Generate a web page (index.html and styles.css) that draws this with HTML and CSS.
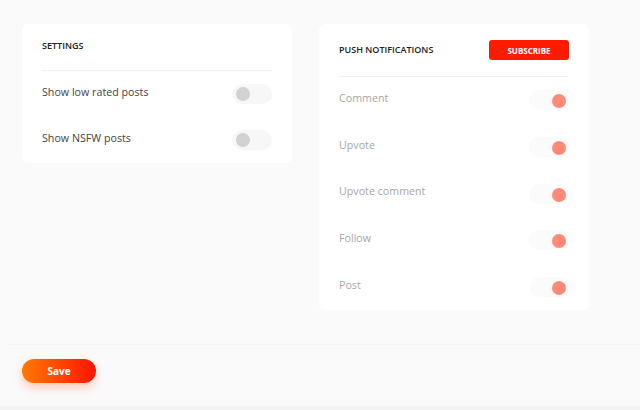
FILE: index.html
```
<!DOCTYPE html>
<html>
<head>
<meta charset="utf-8">
<link rel="stylesheet" href="styles.css">
</head>
<body>
<main class="main">
  <section class="card">
    <div class="card-head">
      <h2 class="title">SETTINGS</h2>
    </div>
    <div class="row">
      <span class="label">Show low rated posts</span>
      <span class="toggle"><span class="knob"></span></span>
    </div>
    <div class="row">
      <span class="label">Show NSFW posts</span>
      <span class="toggle"><span class="knob"></span></span>
    </div>
  </section>
  <section class="card card-push">
    <div class="card-head head-push">
      <h2 class="title">PUSH NOTIFICATIONS</h2>
      <button class="subscribe">SUBSCRIBE</button>
    </div>
    <div class="rows-disabled">
      <div class="row row-push">
        <span class="label">Comment</span>
        <span class="toggle on"><span class="knob"></span></span>
      </div>
      <div class="row row-push">
        <span class="label">Upvote</span>
        <span class="toggle on"><span class="knob"></span></span>
      </div>
      <div class="row row-push">
        <span class="label">Upvote comment</span>
        <span class="toggle on"><span class="knob"></span></span>
      </div>
      <div class="row row-push">
        <span class="label">Follow</span>
        <span class="toggle on"><span class="knob"></span></span>
      </div>
      <div class="row row-push">
        <span class="label">Post</span>
        <span class="toggle on"><span class="knob"></span></span>
      </div>
    </div>
  </section>
</main>
<footer class="footer">
  <button class="save">Save</button>
</footer>
<div class="bottom-strip"></div>
</body>
</html>
```
FILE: styles.css
```
* { box-sizing: border-box; }
html, body { margin: 0; padding: 0; }
body {
  background: #fafafa;
  font-family: "Open Sans", "Noto Sans", sans-serif;
  width: 640px;
  height: 410px;
  overflow: hidden;
}
.main {
  display: flex;
  align-items: flex-start;
  gap: 27px;
  padding: 24px 22px 34px;
}
.card {
  width: 270px;
  background: #fff;
  border-radius: 6px;
  padding: 0 20px;
}
.card-head {
  padding: 16px 0 18px;
  border-bottom: 1px solid #f3f3f3;
}
.head-push {
  display: flex;
  align-items: center;
  justify-content: space-between;
  padding: 16px 0 16px;
}
.title {
  margin: 0;
  font-size: 9px;
  line-height: 12px;
  font-weight: 600;
  color: #222;
}
.subscribe {
  width: 80px;
  height: 20px;
  border: none;
  border-radius: 3px;
  background: #ff1a00;
  color: #fff;
  font-family: inherit;
  font-size: 8px;
  font-weight: 700;
  padding: 0;
}
.row {
  display: flex;
  align-items: center;
  justify-content: space-between;
  height: 46px;
}
.row-push { height: 46.7px; }
.label {
  font-size: 10.7px;
  color: #444;
  padding-bottom: 5px;
}
.rows-disabled .label { color: #a6a6a6; }
.toggle {
  position: relative;
  width: 40px;
  height: 20px;
  border-radius: 10px;
  background: #f7f7f7;
  display: block;
}
.knob {
  position: absolute;
  top: 3px;
  left: 4px;
  width: 14px;
  height: 14px;
  border-radius: 50%;
  background: #d2d2d2;
}
.toggle.on { background: #fbfbfb; }
.toggle.on .knob {
  left: auto;
  right: 3px;
  top: 4px;
  background: #ff8a78;
}
.footer {
  margin-left: 8px;
  border-top: 1px solid #f4f4f4;
  height: 62px;
  padding: 13px 0 0 14px;
}
.save {
  width: 74px;
  height: 24px;
  border: none;
  border-radius: 12px;
  background: linear-gradient(90deg, #ff7a00, #ff1400);
  box-shadow: 0 5px 10px rgba(255, 90, 20, 0.28);
  color: #fff;
  font-family: inherit;
  font-size: 10px;
  font-weight: 700;
  padding: 0;
}
.bottom-strip {
  height: 4px;
  background: #f3f3f3;
}
```
